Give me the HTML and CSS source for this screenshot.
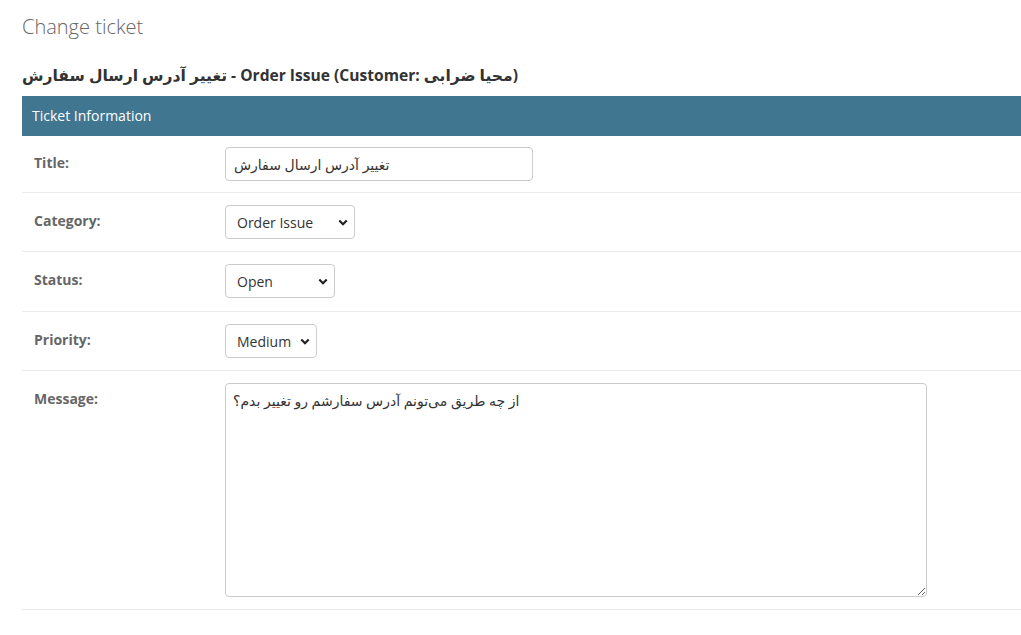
FILE: index.html
```html
<!DOCTYPE html>
<html lang="en">
<head>
<meta charset="utf-8">
<title>Change ticket</title>
<link rel="stylesheet" href="styles.css">
</head>
<body>
<div class="content">
  <h1 class="page-title">Change ticket</h1>
  <h2 class="object-title">تغییر آدرس ارسال سفارش - Order Issue (Customer: محیا ضرابی)</h2>
  <fieldset class="module">
    <h2 class="module-title">Ticket Information</h2>
    <div class="form-row">
      <label class="field-label" for="id_title">Title:</label>
      <input class="text-input" id="id_title" type="text" value="تغییر آدرس ارسال سفارش">
    </div>
    <div class="form-row">
      <label class="field-label" for="id_category">Category:</label>
      <select class="select select-category" id="id_category">
        <option selected>Order Issue</option>
      </select>
    </div>
    <div class="form-row form-row-status">
      <label class="field-label" for="id_status">Status:</label>
      <select class="select select-status" id="id_status">
        <option selected>Open</option>
      </select>
    </div>
    <div class="form-row">
      <label class="field-label" for="id_priority">Priority:</label>
      <select class="select select-priority" id="id_priority">
        <option selected>Medium</option>
      </select>
    </div>
    <div class="form-row">
      <label class="field-label" for="id_message">Message:</label>
      <textarea class="textarea" id="id_message">از چه طریق می‌تونم آدرس سفارشم رو تغییر بدم؟</textarea>
    </div>
  </fieldset>
</div>
</body>
</html>
```

FILE: styles.css
```css
html, body {
  margin: 0;
  padding: 0;
  background: #fff;
}
body {
  font-family: "Open Sans", "DejaVu Sans", sans-serif;
  color: #333;
  font-size: 14px;
}
.content {
  padding: 10px 0 0 22px;
}
.page-title {
  margin: 0;
  font-size: 20px;
  font-weight: 300;
  color: #666;
  line-height: 34px;
}
.object-title {
  margin: 20px 0 0;
  font-size: 15.6px;
  font-weight: 700;
  color: #333;
  line-height: 22px;
  height: 32px;
}
.module {
  margin: 0;
  padding: 0;
  border: 0;
  min-width: 0;
}
.module-title {
  margin: 0;
  height: 40px;
  box-sizing: border-box;
  padding: 0 10px;
  background: #417690;
  color: #fff;
  font-size: 14px;
  font-weight: 400;
  line-height: 40px;
}
.form-row {
  display: flex;
  align-items: flex-start;
  padding: 12px 0 12px 12px;
  border-bottom: 1px solid #eaeaea;
}
.form-row:first-of-type {
  padding-top: 11px;
  padding-bottom: 11px;
}
.form-row-status {
  padding-bottom: 13px;
}
.field-label {
  width: 191px;
  flex: none;
  font-weight: 700;
  color: #666;
  font-size: 14px;
  line-height: 20px;
  padding-top: 6px;
}
.text-input, .select, .textarea {
  box-sizing: border-box;
  border: 1px solid #ccc;
  border-radius: 4px;
  font-family: inherit;
  font-size: 14px;
  color: #333;
  background-color: #fff;
  margin: 0;
}
.text-input {
  width: 308px;
  height: 34px;
  padding: 0 8px;
}
.select {
  height: 34px;
  padding: 0 24px 0 11px;
  appearance: none;
  -webkit-appearance: none;
  background-image: url("data:image/svg+xml,%3Csvg xmlns='http://www.w3.org/2000/svg' width='10' height='7' viewBox='0 0 10 7'%3E%3Cpath d='M1.3 1.5 5 5.2 8.7 1.5' fill='none' stroke='%23222' stroke-width='2.2'/%3E%3C/svg%3E");
  background-repeat: no-repeat;
  background-position: right 6px center;
  background-size: 10px 7px;
}
.select-category { width: 130px; }
.select-status { width: 110px; }
.select-priority { width: 92px; }
.textarea {
  width: 702px;
  height: 214px;
  padding: 7px 7px;
  line-height: 20px;
  resize: both;
}
```
